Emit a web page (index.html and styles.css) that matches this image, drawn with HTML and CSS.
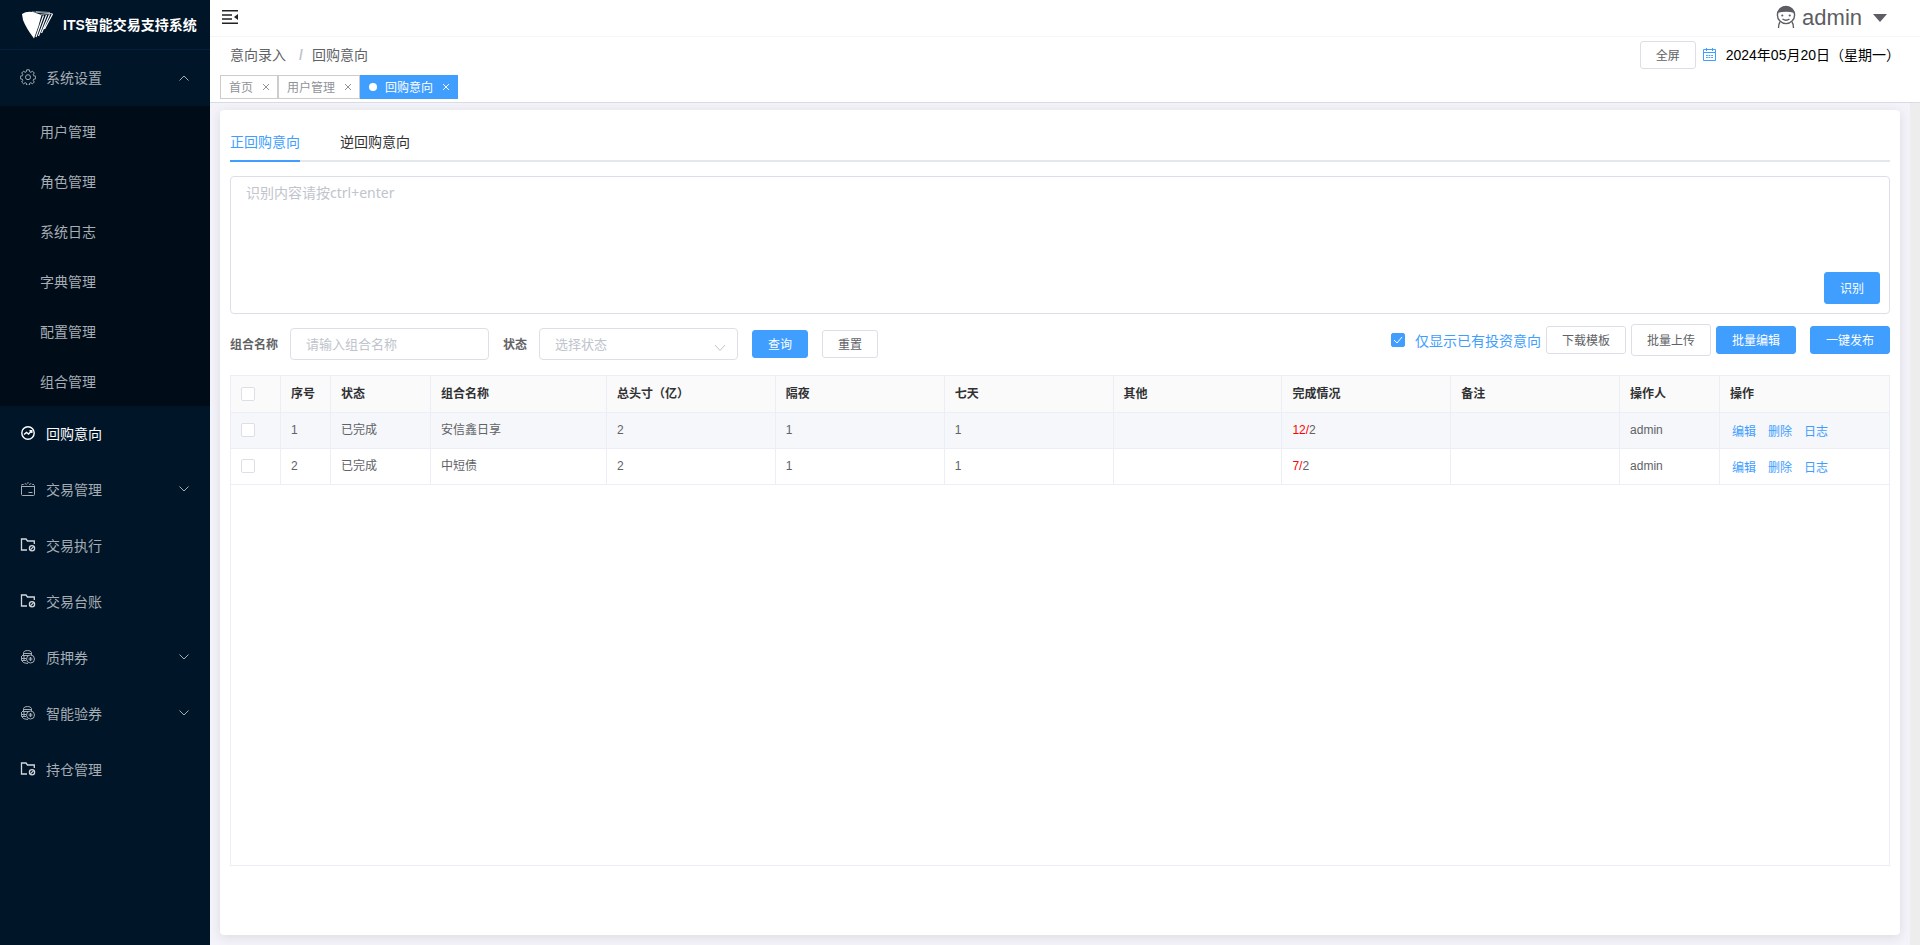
FILE: index.html
```
<!DOCTYPE html>
<html lang="zh-CN">
<head>
<meta charset="utf-8">
<title>ITS智能交易支持系统</title>
<link rel="stylesheet" href="styles.css">
</head>
<body>
<svg class="defs" aria-hidden="true">
  <symbol id="i-folder" viewBox="0 0 16 16"><path d="M7 13H1.500V2H6L7.500 4H14.300V7" fill="none" stroke="currentColor" stroke-width="1.300"/><circle cx="12" cy="11.200" r="2.600" fill="none" stroke="currentColor" stroke-width="1.300"/><path d="M10.400 12.800L13.600 9.600" stroke="currentColor" stroke-width="1.200"/></symbol>
  <symbol id="i-coins" viewBox="0 0 16 16"><g fill="none" stroke="currentColor"><path d="M3.500 6V3.500Q4 1.500 7.500 1.500T11.500 3.500V6M4 4.500h7.500M2 6.500h7M1.500 7v4.500Q3 14.500 8 14.500M2 9.500h4M2 11.500h4M4 7v5"/><circle cx="10.500" cy="10" r="4"/><path d="M10.500 8v4" stroke-width="1.500"/><path d="M8.500 10h4"/></g></symbol>
  <symbol id="i-down" viewBox="0 0 12 12"><path d="M1.500 3.500L6 8L10.500 3.500" fill="none" stroke="currentColor"/></symbol>
</svg>
<div class="app">
  <aside class="sidebar">
    <div class="brand">
      <svg class="brand-logo" viewBox="0 0 32 28"><path d="M0 3Q4 0 11 1L19.500 4Q17 15 12 27.500Q4 17 1 9Z" fill="#fff"/><g stroke="#fff" stroke-width="1.200" fill="none"><path d="M21.500 4.500L14 26M24.500 4L16.500 25M27.500 3.500L19.500 22M30.500 3L22.500 18"/><path d="M10 .8L31 3M14 .5L28 1.500M19 3.500L30 2.500" stroke-width=".8" opacity=".7"/></g></svg>
      <h1 class="brand-name">ITS智能交易支持系统</h1>
    </div>
    <nav class="menu">
      <a class="item" href="#"><svg class="item-icon" viewBox="0 0 16 16"><g fill="none" stroke="currentColor"><path d="M6.700.8h2.600l.4 2 1.100.5 1.700-1.100 1.800 1.800-1.100 1.700.5 1.100 2 .4v2.600l-2 .4-.5 1.100 1.100 1.700-1.800 1.800-1.700-1.100-1.100.5-.4 2H6.700l-.4-2-1.100-.5-1.700 1.100L1.700 13l1.100-1.700-.5-1.100-2-.4V7.200l2-.4.5-1.100L1.700 4l1.800-1.800 1.700 1.100 1.100-.5z" stroke-linejoin="round"/><circle cx="8" cy="8.200" r="2.500"/></g></svg><span>系统设置</span><svg class="arrow arrow-up"><use href="#i-down"/></svg></a>
      <div class="submenu">
        <a class="subitem" href="#">用户管理</a>
        <a class="subitem" href="#">角色管理</a>
        <a class="subitem" href="#">系统日志</a>
        <a class="subitem" href="#">字典管理</a>
        <a class="subitem" href="#">配置管理</a>
        <a class="subitem" href="#">组合管理</a>
      </div>
      <a class="item active" href="#"><svg class="item-icon" viewBox="0 0 16 16"><g fill="none" stroke="currentColor" stroke-width="1.400"><circle cx="8" cy="8" r="6.200"/><path d="M4 9.500L6.500 7.500L8.500 9L11.500 6M9.500 5.800h2.300v2.200"/></g></svg><span>回购意向</span></a>
      <a class="item" href="#"><svg class="item-icon" viewBox="0 0 16 16"><g fill="none" stroke="currentColor"><path d="M1.500 4.500v9q0 1 1 1h11q1 0 1-1v-9M1.500 5.500h13M8.500 11.500h4"/><path d="M1.500 3.500h2l1.500-1 1.500 1 1.500-2 1.500 2 1.500-1 1.500 1h2" stroke-dasharray="2.500 .8"/></g></svg><span>交易管理</span><svg class="arrow"><use href="#i-down"/></svg></a>
      <a class="item" href="#"><svg class="item-icon bright"><use href="#i-folder"/></svg><span>交易执行</span></a>
      <a class="item" href="#"><svg class="item-icon bright"><use href="#i-folder"/></svg><span>交易台账</span></a>
      <a class="item" href="#"><svg class="item-icon"><use href="#i-coins"/></svg><span>质押券</span><svg class="arrow"><use href="#i-down"/></svg></a>
      <a class="item" href="#"><svg class="item-icon"><use href="#i-coins"/></svg><span>智能验券</span><svg class="arrow"><use href="#i-down"/></svg></a>
      <a class="item" href="#"><svg class="item-icon bright"><use href="#i-folder"/></svg><span>持仓管理</span></a>
    </nav>
  </aside>
  <div class="page">
    <header class="topbar">
      <button class="fold" type="button" aria-label="收起菜单"><svg viewBox="0 0 16 14"><path d="M0 .8h16M0 5h10M0 9h10M0 13.200h16" stroke="#222" stroke-width="1.400"/><path d="M16 4v6l-4-3z" fill="#222"/></svg></button>
      <button class="user" type="button">
        <svg class="avatar" viewBox="0 0 20 24"><g fill="none" stroke="#5c5e63" stroke-width="1.400"><circle cx="10" cy="10" r="8.600"/><path d="M4 17Q2.500 19 2.500 23M16 17Q17.500 19 17.500 23M6.500 14Q10 16.500 13.500 14"/></g><path d="M1.500 8Q3 1.200 10 1.200T18.500 8Q10 5.500 1.500 8z" fill="#5c5e63"/><circle cx="6.300" cy="10.500" r="1.100" fill="#5c5e63"/><circle cx="13.700" cy="10.500" r="1.100" fill="#5c5e63"/></svg>
        <span>admin</span>
        <svg class="caret" viewBox="0 0 14 8"><path d="M0 0h14L7 8z" fill="#5c5e63"/></svg>
      </button>
    </header>
    <div class="crumbs">
      <nav class="crumb-list"><span>意向录入</span><span class="slash">/</span><span>回购意向</span></nav>
      <div class="date-box">
        <button class="btn" type="button">全屏</button>
        <svg class="calendar" viewBox="0 0 13 13"><g fill="none" stroke="#409eff"><path d="M.5 1.500h12v11H.5zM.5 4.500h12M3.500 0v3M9.500 0v3"/><path d="M3 7.500h7.500M3 9.500h7.500" stroke-dasharray="1.800 .8"/></g></svg>
        <span class="date">2024年05月20日（星期一）</span>
      </div>
    </div>
    <div class="tags">
      <a class="tag" href="#"><span>首页</span><svg class="close" viewBox="0 0 8 8"><path d="M1 1l6 6M7 1L1 7" stroke="currentColor"/></svg></a>
      <a class="tag" href="#"><span>用户管理</span><svg class="close" viewBox="0 0 8 8"><path d="M1 1l6 6M7 1L1 7" stroke="currentColor"/></svg></a>
      <a class="tag tag-on" href="#"><i class="dot"></i><span>回购意向</span><svg class="close" viewBox="0 0 8 8"><path d="M1 1l6 6M7 1L1 7" stroke="currentColor"/></svg></a>
    </div>
    <main class="main">
      <section class="card">
        <div class="tabs" role="tablist">
          <button class="tab tab-on" type="button" role="tab" aria-selected="true">正回购意向</button>
          <button class="tab" type="button" role="tab" aria-selected="false">逆回购意向</button>
        </div>
        <div class="recognize">
          <textarea class="recognize-text" aria-label="识别内容" placeholder="识别内容请按ctrl+enter"></textarea>
          <button class="btn btn-primary btn-tall recognize-btn" type="button">识别</button>
        </div>
        <form class="filters">
          <div class="filter-left">
            <label class="label" for="combo">组合名称</label>
            <input class="field" id="combo" type="text" placeholder="请输入组合名称">
            <label class="label" for="state">状态</label>
            <select class="field select" id="state"><option>选择状态</option></select>
            <button class="btn btn-primary" type="button">查询</button>
            <button class="btn" type="button">重置</button>
          </div>
          <div class="filter-right">
            <label class="only"><input class="check" type="checkbox" checked>仅显示已有投资意向</label>
            <button class="btn" type="button">下载模板</button>
            <button class="btn btn-tall" type="button">批量上传</button>
            <button class="btn btn-primary" type="button">批量编辑</button>
            <button class="btn btn-primary publish" type="button">一键发布</button>
          </div>
        </form>
        <div class="table-box">
          <table class="table">
            <colgroup><col class="c-s"><col class="c-s"><col class="c-m"><col class="c-l"><col><col><col><col><col><col><col class="c-m"><col></colgroup>
            <thead><tr><th><input class="check" type="checkbox" aria-label="全选"></th><th>序号</th><th>状态</th><th>组合名称</th><th>总头寸（亿）</th><th>隔夜</th><th>七天</th><th>其他</th><th>完成情况</th><th>备注</th><th>操作人</th><th>操作</th></tr></thead>
            <tbody>
              <tr class="row-hover"><td><input class="check" type="checkbox" aria-label="选择第1行"></td><td>1</td><td>已完成</td><td>安信鑫日享</td><td>2</td><td>1</td><td>1</td><td></td><td><span class="red">12/</span>2</td><td></td><td>admin</td><td><div class="ops"><a href="#">编辑</a><a href="#">删除</a><a href="#">日志</a></div></td></tr>
              <tr><td><input class="check" type="checkbox" aria-label="选择第2行"></td><td>2</td><td>已完成</td><td>中短债</td><td>2</td><td>1</td><td>1</td><td></td><td><span class="red">7/</span>2</td><td></td><td>admin</td><td><div class="ops"><a href="#">编辑</a><a href="#">删除</a><a href="#">日志</a></div></td></tr>
            </tbody>
          </table>
        </div>
      </section>
      <div class="rail"></div>
    </main>
  </div>
</div>
</body>
</html>
```
FILE: styles.css
```
* { box-sizing: border-box; }
body {
  margin: 0;
  font-family: "Liberation Sans", "Noto Sans CJK SC", sans-serif;
  font-size: 14px;
  color: #303133;
}
a { text-decoration: none; color: inherit; }
button, input, select, textarea { font-family: inherit; margin: 0; }
.defs { display: none; }
.app { display: flex; min-height: 100vh; }

.sidebar { flex: 0 0 210px; background: #001528; color: #a6adb4; }
.brand {
  display: flex; align-items: center; gap: 9px;
  height: 50px; padding: 0 0 0 22px;
  border-bottom: 1px solid #06203a;
}
.brand-logo { width: 32px; height: 28px; }
.brand-name { margin: 0; font-size: 14px; font-weight: 700; line-height: 20px; color: #fff; white-space: nowrap; }
.item { display: flex; align-items: center; height: 56px; padding: 0 20px; line-height: 20px; }
.item-icon { width: 16px; height: 16px; margin-right: 10px; margin-bottom: 2px; }
.bright { color: #d5d8db; }
.active { color: #fff; }
.arrow { width: 12px; height: 12px; margin-left: auto; margin-bottom: 3px; }
.arrow-up { transform: rotate(180deg); margin-bottom: 1px; }
.submenu { background: #000c17; }
.subitem { display: flex; align-items: center; height: 50px; padding: 0 0 0 40px; }

.page { flex: 1; min-width: 0; display: flex; flex-direction: column; background: #fff; }
.topbar {
  display: flex; justify-content: space-between; align-items: center;
  height: 37px; padding: 0 33px 0 12px;
  border-bottom: 1px solid #f6f6f6;
}
.fold, .user { border: 0; background: none; padding: 0; }
.fold svg { display: block; width: 16px; height: 14px; margin-bottom: 2px; }
.user { display: flex; align-items: center; font-size: 22px; line-height: 32px; color: #5c5e63; }
.avatar { width: 20px; height: 24px; margin-right: 6px; margin-bottom: 2px; }
.caret { width: 14px; height: 8px; margin-left: 11px; }
.crumbs { display: flex; justify-content: space-between; align-items: center; height: 36px; padding: 0 20px; }
.crumb-list { padding-bottom: 3px; color: #606266; }
.slash { margin: 0 9px 0 13px; color: #c0c4cc; font-weight: 700; }
.date-box { display: flex; align-items: center; color: #000; white-space: nowrap; }
.calendar { width: 13px; height: 13px; margin: 0 10px 2px 7px; }
.date { padding-bottom: 3px; }
.tags { display: flex; height: 30px; padding: 2px 10px 0; border-bottom: 1px solid #d8dce5; }
.tag {
  display: flex; align-items: center; height: 24px; padding: 0 7px 0 8px;
  border: 1px solid #ccc; font-size: 12px; color: #909399;
}
.tag span { padding-bottom: 2px; }
.tag-on { background: #409eff; border-color: #409eff; color: #fff; }
.dot { width: 8px; height: 8px; margin-right: 8px; border-radius: 50%; background: #fff; }
.close { width: 8px; height: 8px; margin: 0 0 1px 9px; }

.main { flex: 1; display: flex; background: #f3f3f9; }
.card {
  flex: 1; min-width: 0; display: flex; flex-direction: column;
  margin: 7px 10px 10px; padding: 10px 10px 69px;
  background: #fff; border-radius: 4px;
  box-shadow: 0 2px 12px rgba(0, 0, 0, .1);
}
.rail { flex: 0 0 10px; background: #ededed; }
.tabs { display: flex; gap: 40px; border-bottom: 2px solid #e4e7ed; margin-bottom: 14px; }
.tab { height: 42px; margin-bottom: -2px; padding: 1px 0 0; border: 0; border-bottom: 2px solid transparent; background: none; font-size: 14px; color: #303133; }
.tab-on { color: #409eff; border-bottom-color: #409eff; }
.recognize { position: relative; margin-bottom: 14px; }
.recognize-text {
  display: block; width: 100%; height: 138px; padding: 5px 15px;
  border: 1px solid #dcdfe6; border-radius: 4px; resize: none;
  font-family: "Noto Sans", "Noto Sans CJK SC", sans-serif;
  font-size: 14px; line-height: 21px; outline: none;
}
.recognize-btn { position: absolute; right: 10px; bottom: 10px; }
::placeholder { color: #c0c4cc; opacity: 1; }

.btn {
  height: 28px; padding: 2px 15px 0; border: 1px solid #dcdfe6; border-radius: 3px;
  background: #fff; color: #606266; font-size: 12px; line-height: 12px; white-space: nowrap;
}
.btn-tall { height: 32px; }
.btn-primary { background: #409eff; border-color: #409eff; color: #fff; }
.filters { display: flex; justify-content: space-between; align-items: flex-start; margin-bottom: 15px; }
.filter-left, .filter-right { display: flex; align-items: center; height: 32px; }
.label { margin-right: 12px; padding-bottom: 2px; font-size: 12px; font-weight: 700; color: #606266; }
.field {
  width: 199px; height: 32px; padding: 0 15px; margin-right: 14px;
  border: 1px solid #dcdfe6; border-radius: 4px; background: #fff;
  font-size: 13px; color: #606266; outline: none;
}
.select {
  appearance: none; color: #c0c4cc;
  background: url("data:image/svg+xml,%3Csvg xmlns='http://www.w3.org/2000/svg' viewBox='0 0 12 8'%3E%3Cpath d='M1 1l5 5.500L11 1' fill='none' stroke='%23c0c4cc'/%3E%3C/svg%3E") no-repeat right 11px top 15px / 12px 8px #fff;
}
.filter-left .btn + .btn { margin-left: 14px; }
.filter-right { gap: 5px; margin-top: -4px; }
.publish { margin-left: 9px; }
.only { display: flex; align-items: center; gap: 10px; padding-bottom: 1px; color: #409eff; }
.check {
  appearance: none; display: block; flex: none; width: 14px; height: 14px;
  border: 1px solid #dcdfe6; border-radius: 2px; background: #fff;
}
.check:checked {
  border-color: #409eff;
  background: url("data:image/svg+xml,%3Csvg xmlns='http://www.w3.org/2000/svg' viewBox='0 0 12 12'%3E%3Cpath d='M2 6l3 3 5-6' fill='none' stroke='%23fff'/%3E%3C/svg%3E") #409eff;
}

.table-box { flex: 1; border: 1px solid #ebeef5; }
.table { width: 100%; table-layout: fixed; border-collapse: separate; border-spacing: 0; font-size: 12px; color: #606266; }
.c-s { width: 50px; }
.c-m { width: 100px; }
.c-l { width: 176px; }
.table th, .table td {
  height: 36px; padding: 0 10px 2px; text-align: left; line-height: 18px;
  border-right: 1px solid #ebeef5; border-bottom: 1px solid #ebeef5;
}
.table th { height: 37px; padding-bottom: 1px; background: #fafafa; color: #303133; font-weight: 700; }
.table th:last-child, .table td:last-child { border-right: 0; }
.row-hover td { background: #f5f7fa; }
.red { color: #f00; }
.ops { display: flex; gap: 12px; padding: 5px 0 0 2px; color: #409eff; }
```
